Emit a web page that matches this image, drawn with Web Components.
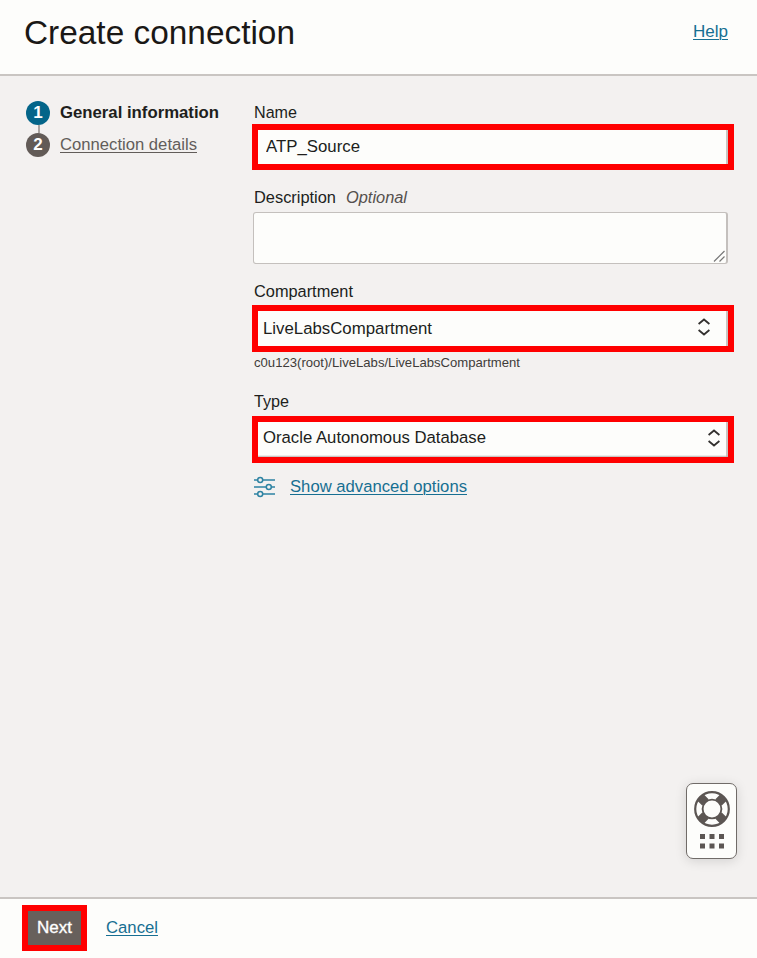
<!DOCTYPE html>
<html lang="en"><head><meta charset="utf-8"><title>Create connection</title>
<style>
html,body{margin:0;height:100%;overflow:hidden}
body{font:17.2px/20px "Liberation Sans",Arial,sans-serif;color:#201e1c;background:#fdfdfb}
</style></head><body>
<connection-dialog></connection-dialog>
<script>
const define=(name,html,setup)=>customElements.define(name,class extends HTMLElement{
  connectedCallback(){
    if(this.shadowRoot)return;
    this.attachShadow({mode:'open'}).innerHTML=html;
    if(setup)setup(this,this.shadowRoot);
  }
});

/* One line of text condensed or widened to fill the given width. */
define('fit-text',`<style>:host{display:inline-block;white-space:pre;vertical-align:top}span{display:inline-block;vertical-align:top;transform-origin:0 50%;text-decoration:var(--line,none);text-decoration-thickness:1.2px;text-underline-offset:1.5px}</style><span><slot></slot></span>`,(el,root)=>{
  const s=root.querySelector('span'),w=+el.getAttribute('w'),natural=s.getBoundingClientRect().width;
  el.style.width=w+'px';
  s.style.transform='scaleX('+w/natural+')';
});

define('link-text',`<style>:host{display:inline-block;color:var(--link,#176f92);--line:underline}a{color:inherit;display:block;cursor:pointer}</style><a><slot></slot></a>`);

define('page-header',`<style>:host{display:flex;justify-content:space-between;box-sizing:border-box;height:76px;padding:15px 29px 0 24px;border-bottom:2px solid #c9c5c2;background:#fdfdfb}
h1{margin:0;font-size:33px;line-height:36px;font-weight:400;color:#1a1816}link-text{margin-top:6px}</style>
<h1><fit-text w="271">Create connection</fit-text></h1><link-text><fit-text w="35">Help</fit-text></link-text>`);

define('step-item',`<style>:host{display:flex;height:32px;align-items:flex-start;gap:10px}
i{font-style:normal;font-weight:700;color:#fff;background:var(--c);width:24px;height:24px;border-radius:50%;text-align:center;line-height:23px;font-size:17px;position:relative}
:host([first]) i::after{content:"";position:absolute;left:12px;top:24px;height:8px;width:1.5px;background:#aaa5a2}
:host([first]){font-weight:700}</style><i></i><slot></slot>`,(el,r)=>{
  r.querySelector('i').textContent=el.getAttribute('n');
});

define('form-label',`<style>:host{display:block;height:20px;padding-left:.5px}</style><slot></slot>`);

define('marked-field',`<style>:host{display:flex;box-sizing:border-box;border:6px solid #f00;width:482px;height:var(--h,47px);margin-left:-1px;background:linear-gradient(to left,#c9c5c2 2px,#fdfdfb 2px);align-items:center;justify-content:space-between;padding:0 var(--r,17px) 0 5px}
svg{display:block;width:14px;height:18px;margin-top:var(--sy,0)}:host([plain]) svg{display:none}
:host([floor]){background:linear-gradient(to top,#b9b4b1 0,transparent 2px),linear-gradient(to left,#c9c5c2 2px,#fdfdfb 2px)}
:host([plain]){padding-left:8px}</style><slot></slot>
<svg viewBox="0 0 14 18" fill="none" stroke="#33302e" stroke-width="1.8"><path d="M1.6 6 7 1.5 12.4 6M1.6 12 7 16.5 12.4 12"/></svg>`);

define('text-area',`<style>:host{display:flex;align-items:flex-end;justify-content:flex-end;box-sizing:border-box;width:475px;height:52px;border:1.5px solid #c4c0bd;border-right-width:2px;border-radius:3px;background:#fdfdfb;padding:1px}svg{display:block}</style>
<svg width="12" height="12" fill="none" stroke="#777" stroke-width="1.2"><path d="M1 11.5 11.5 1M6.5 11.5l5-5"/></svg>`);

define('help-widget',`<style>:host{display:flex;flex-direction:column;align-items:center;box-sizing:border-box;width:51px;height:76px;border:1.6px solid #706b68;border-radius:7px;background:#fdfdfb;box-shadow:0 2px 12px #0002;padding-top:5.5px}svg{display:block}</style>
<svg width="38" height="38" viewBox="-19 -19 38 38" fill="none" stroke="#5c5653"><circle r="16.8" stroke-width="2.2"/><circle r="9.4" stroke-width="1.9"/><path stroke-width="9" d="M6.6 6.6 11.7 11.7M-6.6 6.6-11.7 11.7M6.6-6.6 11.7-11.7M-6.6-6.6-11.7-11.7"/></svg>
<svg width="26" height="16" fill="#5c5653" style="margin-top:5px"><path d="M1 1h5v5H1zM10.5 1h5v5h-5zM20 1h5v5h-5zM1 10.5h5v5H1zM10.5 10.5h5v5h-5zM20 10.5h5v5h-5z"/></svg>`);

define('page-footer',`<style>:host{display:flex;box-sizing:border-box;height:61px;border-top:2px solid #c9c5c2;padding:6px 0 0 22px;gap:19px;background:#fdfdfb}
button{font:inherit;color:#fff;background:#67605c;border:6px solid #f00;width:65px;height:46px;padding:0 0 3px;box-sizing:border-box;-webkit-text-stroke:.35px #fff}link-text{margin-top:12px}</style>
<button><fit-text w="35">Next</fit-text></button><link-text><fit-text w="52">Cancel</fit-text></link-text>`);

define('connection-dialog',`<style>:host{display:grid;grid-template-rows:76px 821px 61px;height:958px}
main{background:#f3f1f0;display:grid;grid-template-columns:227px 482px;padding:0 0 0 26px;position:relative;align-content:start}
nav{padding-top:25px}nav fit-text{margin-top:1px}
form{display:flex;flex-direction:column;align-items:flex-start;padding-top:26px}
em{color:#55504d}small{font-size:12.2px;line-height:16px;color:#403c39;padding-left:.5px;margin:3px 0 20px}
.adv{display:flex;gap:15px;margin-top:13px;padding-left:1px}
help-widget{position:absolute;left:686px;top:707px}</style>
<page-header></page-header>
<main><nav><step-item first n="1" style="--c:#046589"><fit-text w="159">General information</fit-text></step-item><step-item n="2" style="--c:#625b57"><link-text style="--link:#625d5a"><fit-text w="137">Connection details</fit-text></link-text></step-item></nav>
<form><form-label><fit-text w="43">Name</fit-text></form-label>
<marked-field plain style="--h:46px;margin-top:2px"><fit-text w="94" style="margin-top:-2px">ATP_Source</fit-text></marked-field>
<form-label style="margin-top:17px"><fit-text w="82">Description</fit-text><em style="margin-left:10px"><fit-text w="61">Optional</fit-text></em></form-label>
<text-area style="margin-top:5px"></text-area>
<form-label style="margin-top:17px"><fit-text w="99">Compartment</fit-text></form-label>
<marked-field style="margin-top:4px;--sy:-3px"><fit-text w="169" style="margin-top:-2px">LiveLabsCompartment</fit-text></marked-field>
<small><fit-text w="266">c0u123(root)/LiveLabs/LiveLabsCompartment</fit-text></small>
<form-label><fit-text w="35">Type</fit-text></form-label>
<marked-field floor style="margin-top:5px;--r:7px;--sy:-4px"><fit-text w="223" style="margin-top:-5px">Oracle Autonomous Database</fit-text></marked-field>
<div class="adv"><svg width="21" height="22" fill="none" stroke="#2e83a2" stroke-width="1.5"><path d="M0 4h3.5M9 4h12M0 11h12M17.5 11H21M0 18h3.5M9 18h12"/><circle cx="6.2" cy="4" r="2.5"/><circle cx="14.8" cy="11" r="2.5"/><circle cx="6.2" cy="18" r="2.5"/></svg><link-text><fit-text w="177">Show advanced options</fit-text></link-text></div>
</form><help-widget></help-widget></main>
<page-footer></page-footer>`);
</script>
</body></html>
